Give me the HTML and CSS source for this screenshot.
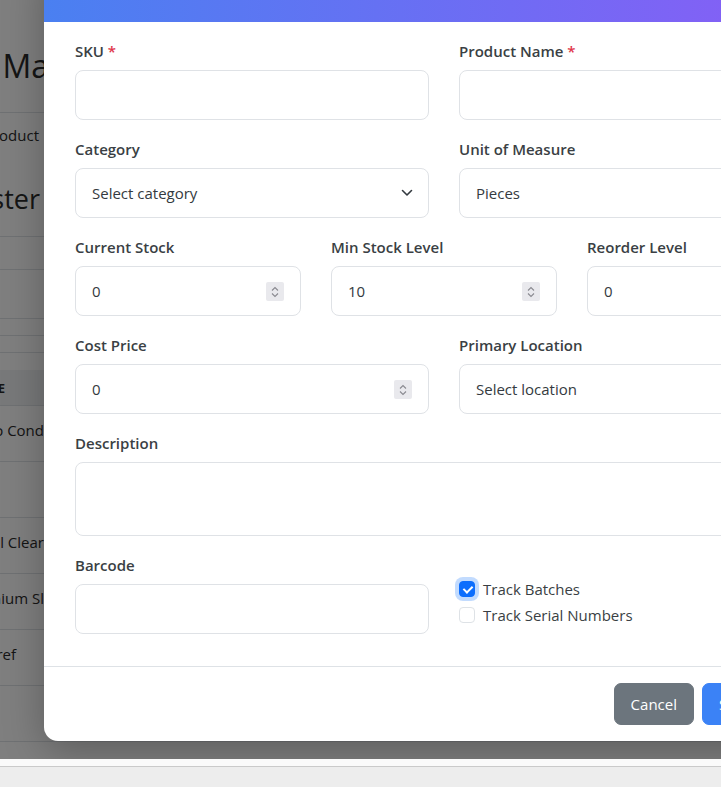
FILE: index.html
```html
<!DOCTYPE html>
<html lang="en">
<head>
<meta charset="utf-8">
<title>Add Product</title>
<link rel="stylesheet" href="styles.css">
</head>
<body>
<div class="viewport">
  <div class="page">
    <div class="bg-line bg-brand"><span>Inventory Ma</span></div>
    <div class="bg-line bg-tab"><span>Add Product</span></div>
    <div class="bg-line bg-heading"><span>Product Master</span></div>
    <div class="bg-line bg-band bg-b1"></div>
    <div class="bg-line bg-band bg-b2"></div>
    <div class="bg-line bg-band bg-b3"></div>
    <div class="bg-line bg-band bg-b4"></div>
    <div class="bg-line bg-gap"></div>
    <div class="bg-line bg-thead"><span>TYPE</span></div>
    <div class="bg-line bg-row"><span>Turbo Cond</span></div>
    <div class="bg-line bg-row"><span></span></div>
    <div class="bg-line bg-row"><span>Steel Clear</span></div>
    <div class="bg-line bg-row"><span>Premium Sl</span></div>
    <div class="bg-line bg-row bg-short"><span>Fridge ref</span></div>
    <div class="bg-line bg-row"><span></span></div>
  </div>
  <div class="backdrop"></div>

  <div class="modal">
    <div class="modal-header"></div>
    <form class="modal-body">
      <div class="form-row cols-2">
        <div class="field">
          <label class="label">SKU <span class="req">*</span></label>
          <input class="control" type="text">
        </div>
        <div class="field">
          <label class="label">Product Name <span class="req">*</span></label>
          <input class="control" type="text">
        </div>
      </div>

      <div class="form-row cols-2">
        <div class="field">
          <label class="label">Category</label>
          <div class="control-wrap">
            <div class="control select">Select category</div>
            <svg class="chevron" width="12" height="8" viewBox="0 0 12 8"><path d="M1.5 1.5 L6 6 L10.5 1.5" fill="none" stroke="#343a40" stroke-width="1.6" stroke-linecap="round" stroke-linejoin="round"/></svg>
          </div>
        </div>
        <div class="field">
          <label class="label">Unit of Measure</label>
          <div class="control-wrap">
            <div class="control select">Pieces</div>
            <svg class="chevron" width="12" height="8" viewBox="0 0 12 8"><path d="M1.5 1.5 L6 6 L10.5 1.5" fill="none" stroke="#343a40" stroke-width="1.6" stroke-linecap="round" stroke-linejoin="round"/></svg>
          </div>
        </div>
      </div>

      <div class="form-row cols-3">
        <div class="field">
          <label class="label">Current Stock</label>
          <div class="control-wrap">
            <input class="control" type="text" value="0">
            <span class="spin"><svg width="10" height="14" viewBox="0 0 10 14"><path d="M2 5.5 L5 2.5 L8 5.5 M2 8.5 L5 11.5 L8 8.5" fill="none" stroke="#8a8a90" stroke-width="1.1"/></svg></span>
          </div>
        </div>
        <div class="field">
          <label class="label">Min Stock Level</label>
          <div class="control-wrap">
            <input class="control" type="text" value="10">
            <span class="spin"><svg width="10" height="14" viewBox="0 0 10 14"><path d="M2 5.5 L5 2.5 L8 5.5 M2 8.5 L5 11.5 L8 8.5" fill="none" stroke="#8a8a90" stroke-width="1.1"/></svg></span>
          </div>
        </div>
        <div class="field">
          <label class="label">Reorder Level</label>
          <div class="control-wrap">
            <input class="control" type="text" value="0">
            <span class="spin"><svg width="10" height="14" viewBox="0 0 10 14"><path d="M2 5.5 L5 2.5 L8 5.5 M2 8.5 L5 11.5 L8 8.5" fill="none" stroke="#8a8a90" stroke-width="1.1"/></svg></span>
          </div>
        </div>
      </div>

      <div class="form-row cols-2">
        <div class="field">
          <label class="label">Cost Price</label>
          <div class="control-wrap">
            <input class="control" type="text" value="0">
            <span class="spin"><svg width="10" height="14" viewBox="0 0 10 14"><path d="M2 5.5 L5 2.5 L8 5.5 M2 8.5 L5 11.5 L8 8.5" fill="none" stroke="#8a8a90" stroke-width="1.1"/></svg></span>
          </div>
        </div>
        <div class="field">
          <label class="label">Primary Location</label>
          <div class="control-wrap">
            <div class="control select">Select location</div>
            <svg class="chevron" width="12" height="8" viewBox="0 0 12 8"><path d="M1.5 1.5 L6 6 L10.5 1.5" fill="none" stroke="#343a40" stroke-width="1.6" stroke-linecap="round" stroke-linejoin="round"/></svg>
          </div>
        </div>
      </div>

      <div class="form-row">
        <div class="field">
          <label class="label">Description</label>
          <textarea class="control textarea"></textarea>
        </div>
      </div>

      <div class="form-row cols-2 last">
        <div class="field">
          <label class="label">Barcode</label>
          <input class="control" type="text">
        </div>
        <div class="checks">
          <label class="check"><span class="box checked focused"></span>Track Batches</label>
          <label class="check"><span class="box"></span>Track Serial Numbers</label>
        </div>
      </div>
    </form>
    <div class="modal-footer">
      <button class="btn btn-secondary" type="button">Cancel</button>
      <button class="btn btn-primary" type="button">Save Product</button>
    </div>
  </div>
</div>
<div class="hscroll-gap"></div>
<div class="hscroll"></div>
</body>
</html>
```

FILE: styles.css
```css
* { box-sizing: border-box; }

html, body {
  margin: 0;
  padding: 0;
}

body {
  width: 721px;
  height: 787px;
  overflow: hidden;
  font-family: "Open Sans", "Noto Sans", "Liberation Sans", sans-serif;
  color: #343a40;
  background: #ffffff;
}

.viewport {
  position: relative;
  height: 759px;
  overflow: hidden;
  background: #ffffff;
}

/* background page (mostly hidden) */
.page {
  display: flex;
  flex-direction: column;
  width: 721px;
  color: #2b2b2b;
}

.bg-line {
  display: flex;
  justify-content: flex-end;
  align-items: center;
  width: 44px;
  white-space: nowrap;
  position: relative;
}

.bg-line::after {
  content: "";
  position: absolute;
  left: 0;
  bottom: 0;
  width: 721px;
  height: 1px;
  background: #dee2e6;
}

.bg-brand {
  width: 49px;
  height: 113px;
  padding-top: 18px;
  font-size: 32px;
  font-weight: 400;
}

.bg-tab {
  height: 44px;
  font-size: 15px;
  padding-right: 5px;
}
.bg-tab::after { display: none; }

.bg-heading {
  height: 80px;
  font-size: 27px;
  padding-right: 4px;
  padding-top: 2px;
}

.bg-b1 { height: 33px; }
.bg-b2 { height: 49px; }
.bg-b3 { height: 17px; }
.bg-b4 { height: 17px; }
.bg-gap { height: 17px; }
.bg-gap::after { display: none; }

.bg-thead {
  height: 36px;
  background: #f1f3f5;
  font-size: 13px;
  font-weight: 700;
  width: 721px;
  justify-content: flex-start;
  margin-left: -26px;
}

.bg-row {
  height: 56px;
  font-size: 15px;
  padding-bottom: 8px;
}

.bg-short {
  width: 16px;
}

.backdrop {
  position: absolute;
  inset: 0;
  background: rgba(0, 0, 0, 0.5);
}

/* modal */
.modal {
  position: absolute;
  left: 44px;
  top: -39px;
  width: 800px;
  background: #ffffff;
  border-radius: 14px;
  box-shadow: 0 10px 40px rgba(0, 0, 0, 0.28);
  overflow: hidden;
}

.modal-header {
  height: 61px;
  background: linear-gradient(90deg, #4a80f1 0%, #8b5cf6 100%);
}

.modal-body {
  display: flex;
  flex-direction: column;
  gap: 18px;
  padding: 18px 31px 32px;
  margin: 0;
}

.form-row {
  display: grid;
  grid-template-columns: 1fr;
  column-gap: 30px;
}

.cols-2 { grid-template-columns: 1fr 1fr; }
.cols-3 { grid-template-columns: 1fr 1fr 1fr; }

.field {
  display: flex;
  flex-direction: column;
}

.label {
  display: block;
  font-size: 15px;
  font-weight: 600;
  line-height: 22px;
  margin-bottom: 8px;
  color: #3a3f44;
}

.req { color: #e0354a; }

.control-wrap {
  position: relative;
}

.control {
  display: flex;
  align-items: center;
  width: 100%;
  height: 50px;
  border: 1px solid #dfe2e6;
  border-radius: 8px;
  padding: 0 16px;
  font-family: inherit;
  font-size: 15px;
  color: #343a40;
  background: #ffffff;
  outline: none;
}

.textarea {
  height: 74px;
  resize: none;
  display: block;
}

.chevron {
  position: absolute;
  right: 16px;
  top: 21px;
}

.spin {
  position: absolute;
  right: 17px;
  top: 16px;
  width: 18px;
  height: 19px;
  background: #e9e9ed;
  border-radius: 2px;
  display: flex;
  align-items: center;
  justify-content: center;
}

.checks {
  display: flex;
  flex-direction: column;
  padding-top: 22px;
}

.check {
  display: flex;
  align-items: center;
  gap: 8px;
  height: 26px;
  font-size: 15px;
  color: #3a3f44;
}

.box {
  position: relative;
  width: 16px;
  height: 16px;
  border: 1px solid #dee2e6;
  border-radius: 4px;
  background: #ffffff;
  flex: none;
}

.box.checked {
  background: #0d6efd;
  border-color: #0d6efd;
}

.box.checked::after {
  content: "";
  position: absolute;
  left: 4.5px;
  top: 2px;
  width: 4px;
  height: 7px;
  border: solid #ffffff;
  border-width: 0 2px 2px 0;
  transform: rotate(45deg);
}

.box.focused {
  box-shadow: 0 0 0 4px rgba(13, 110, 253, 0.25);
}

.modal-footer {
  display: flex;
  justify-content: flex-end;
  gap: 8px;
  padding: 16px 31px;
  border-top: 1px solid #dee2e6;
}

.btn {
  height: 42px;
  padding: 0 16px;
  border: 1px solid transparent;
  border-radius: 7px;
  font-family: inherit;
  font-size: 15px;
  color: #ffffff;
  cursor: pointer;
  white-space: nowrap;
  overflow: hidden;
}

.btn-secondary { background: #6c757d; border-color: #6c757d; }
.btn-primary {
  width: 111px;
  text-align: left;
  background: #3b82f6;
  border-color: #3b82f6;
}

/* bottom strip */
.hscroll-gap {
  height: 7px;
  background: #fafafa;
}

.hscroll {
  height: 21px;
  background: #ededed;
  border-top: 1px solid #cacaca;
}
```
